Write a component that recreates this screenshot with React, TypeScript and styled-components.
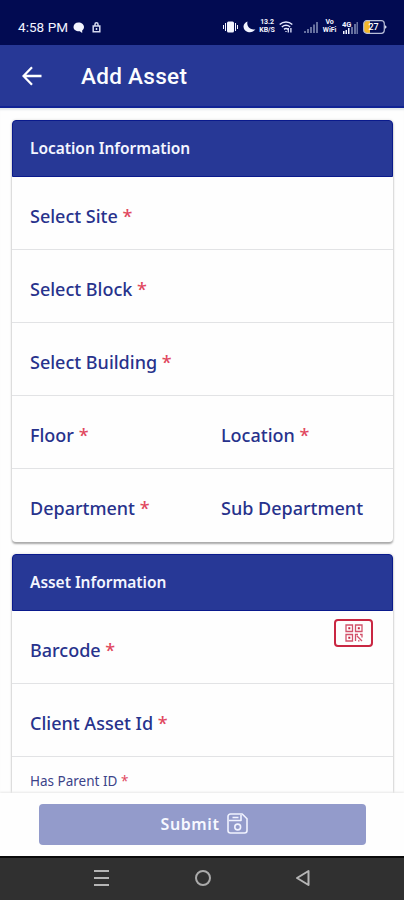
import React from "react";
import styled, { createGlobalStyle } from "styled-components";

const GlobalStyle = createGlobalStyle`
  *, *::before, *::after { box-sizing: border-box; }
  body { margin: 0; background: #fdfdfd; font-family: "Noto Sans", "Open Sans", sans-serif; }
`;

const Screen = styled.div`
  width: 404px;
  height: 900px;
  display: flex;
  flex-direction: column;
  overflow: hidden;
  background: #fefefe;
`;

const StatusBar = styled.div`
  flex: none;
  height: 45px;
  padding: 9px 17px 0 18px;
  display: flex;
  align-items: center;
  background: #020b52;
  color: #f2f4ff;
`;

const Clock = styled.span`
  width: 50px;
  font: 400 13.5px/18px Roboto, sans-serif;
  letter-spacing: 0.05px;
  white-space: nowrap;
`;

const StatusIcon = styled.svg<{ $gap?: number }>`
  flex: none;
  display: block;
  margin-left: ${({ $gap = 0 }) => $gap}px;
`;

const Spacer = styled.div`
  flex: 1;
`;

const TinyStack = styled.div<{ $gap: number; $width: number }>`
  width: ${({ $width }) => $width}px;
  margin-left: ${({ $gap }) => $gap}px;
  margin-top: -2px;
  display: flex;
  flex-direction: column;
  align-items: center;
  font: 700 7px/8px Roboto, sans-serif;
  letter-spacing: -0.1px;
  white-space: nowrap;
`;

const AppBar = styled.header`
  flex: none;
  height: 63px;
  padding: 1px 22px 0;
  display: flex;
  align-items: center;
  gap: 39px;
  background: #273896;
  border-bottom: 2px solid #102393;
`;

const Title = styled.h1`
  margin: 0;
  font: 500 22.5px/30px Roboto, sans-serif;
  letter-spacing: 0.3px;
  color: #fbfcff;
`;

const Content = styled.main`
  flex: none;
  height: 685px;
  padding: 12px 11px 0 12px;
  overflow: hidden;
  display: flex;
  flex-direction: column;
  gap: 12px;
  box-shadow: inset 0 3px 2px -1px #e3e8ea;
`;

const Card = styled.section`
  flex: none;
  border-radius: 4px;
  background: #fefefe;
  box-shadow: 0 2px 2px #a9a9a9, 0 0 2px 1px #ececec;
`;

const CardHeader = styled.h2`
  height: 57px;
  margin: 0;
  padding: 0 17px 1px;
  display: flex;
  align-items: center;
  border: 1px solid #0a1a8c;
  border-radius: 4px 4px 0 0;
  background: #273896;
  color: #f3f5ff;
  font-size: 15.5px;
  font-weight: 600;
  line-height: 22px;
  letter-spacing: -0.03px;
`;

const Row = styled.div<{ $last?: boolean }>`
  height: ${({ $last }) => ($last ? 72.6 : 73.1)}px;
  padding: 5px 18px 0;
  display: grid;
  grid-template-columns: 191px 1fr;
  align-items: center;
  border-bottom: ${({ $last }) => ($last ? 0 : "1px solid #e2e3e5")};
`;

const Label = styled.span<{ $small?: boolean }>`
  color: ${({ $small }) => ($small ? "#3c4389" : "#27328c")};
  font-size: ${({ $small }) => ($small ? 13.5 : 18)}px;
  font-weight: ${({ $small }) => ($small ? 400 : 500)};
  line-height: 24px;
  white-space: nowrap;
`;

const Required = styled.span`
  color: #e1485f;
`;

const ParentRow = styled.div`
  height: 73px;
  padding: 12px 18px;
`;

const ScanButton = styled.button`
  justify-self: end;
  align-self: start;
  width: 39px;
  height: 28px;
  margin: 3px 2px 0 0;
  padding: 0;
  display: flex;
  align-items: center;
  justify-content: center;
  border: 2px solid #c92742;
  border-radius: 4px;
  background: #fefefe;
`;

const Footer = styled.footer`
  flex: none;
  height: 63px;
  padding: 11px 38px 0 39px;
  background: #fefefe;
  box-shadow: 0 -1px 2px #e8e8e8;
`;

const Submit = styled.button`
  width: 100%;
  height: 41px;
  padding: 0 0 2px 3px;
  display: flex;
  align-items: center;
  justify-content: center;
  gap: 7px;
  border: 0;
  border-radius: 4px;
  background: #939bcb;
  color: #f7f8ff;
  font: 600 16px/24px "Noto Sans", sans-serif;
  letter-spacing: 0.6px;
`;

const NavBar = styled.nav`
  flex: none;
  height: 44px;
  padding: 0 92px 2px;
  display: flex;
  align-items: center;
  justify-content: space-between;
  background: #303030;
  border-top: 2px solid #0b0b0b;
`;

type FieldProps = { text: string; required?: boolean; small?: boolean };

function Field({ text, required = true, small }: FieldProps) {
  return (
    <Label $small={small}>
      {text}
      {required && <Required> *</Required>}
    </Label>
  );
}

function Signal({ gap }: { gap: number }) {
  return (
    <StatusIcon $gap={gap} width="15" height="12" viewBox="0 0 15 12" fill="#66709f">
      <path d="M0 10h2v2H0zM3 8h2v4H3zM6 6h2v6H6zM9 3.500h2V12H9zM12 1h2v11h-2z" />
    </StatusIcon>
  );
}

function QrIcon() {
  return (
    <svg width="18" height="18" viewBox="0 0 18 18" fill="none" stroke="#d2516a" strokeWidth="1.3">
      <path d="M1 1h6.500v6.500H1zM10.500 1H17v6.500h-6.500zM1 10.500h6.500V17H1z" />
      <path d="M10.500 17v-6.500h2.500M12 12l5 5M15 10.500h2v3M13 16.800h1.500" />
      <path d="M3.300 3.300h2v2h-2zM12.800 3.300h2v2h-2zM3.300 12.800h2v2h-2z" fill="#c92742" stroke="none" />
    </svg>
  );
}

function SaveIcon() {
  return (
    <svg width="21" height="21" viewBox="0 0 21 21" fill="none" stroke="#f1f3ff" strokeWidth="1.600" strokeLinejoin="round">
      <path d="M3.500 1h11.700L20 5.800v11.700a2.500 2.500 0 0 1-2.500 2.500h-14A2.500 2.500 0 0 1 1 17.500v-14A2.500 2.500 0 0 1 3.500 1z" />
      <path d="M2 7.500h12V2M5.500 4.500h6" />
      <circle cx="10.700" cy="14" r="2.900" />
    </svg>
  );
}

export default function App() {
  return (
    <>
      <GlobalStyle />
      <Screen>
        <StatusBar>
          <Clock>4:58 PM</Clock>
          <StatusIcon $gap={5} width="12" height="11" viewBox="0 0 12 11" fill="#f2f4ff">
            <path d="M5.500.5C8.500.5 11 2.300 11 5c0 1.500-.7 2.600-1.800 3.400V11L6.800 9.300C3 9.600.5 7.500.5 5 .5 2.300 2.500.5 5.500.5z" />
          </StatusIcon>
          <StatusIcon $gap={7} width="9" height="12" viewBox="0 0 9 12" fill="none" stroke="#d5d9ef" strokeWidth="1.500">
            <path d="M1.200 5h6.600v5.800H1.200zM3 5V3.300a1.500 1.500 0 0 1 3 0V5M4.500 7v2" />
          </StatusIcon>
          <Spacer />
          <StatusIcon width="15" height="12" viewBox="0 0 15 12" fill="#f2f4ff">
            <rect x="4" y="0.500" width="7" height="11" rx="1.500" />
            <path d="M2 2h1v8H2zM0 4h1v4H0zM12 2h1v8h-1zM14 4h1v4h-1z" />
          </StatusIcon>
          <StatusIcon $gap={5} width="13" height="12" viewBox="0 0 13 12" fill="#f2f4ff">
            <path d="M4.500.5C3.200 4.800 7 9.500 12.500 8.300 10.800 10.600 8.500 11.600 6 11.300 2.700 11 .5 8.300.5 5.300.7 3.200 2.200 1.300 4.500.5z" />
          </StatusIcon>
          <TinyStack $gap={3} $width={16}>
            <span>13.2</span>
            <span>KB/S</span>
          </TinyStack>
          <StatusIcon $gap={4} width="14" height="12" viewBox="0 0 14 12" fill="none" stroke="#e4e8ff" strokeWidth="1.500">
            <path d="M.7 3.500C4.300.3 9.700.3 13.300 3.500M2.800 6c2.500-2 5.900-2 8.400 0M5 8.300c1.300-1 2.700-1 4 0" />
            <path d="M9.300 7v4.500M11.900 7v4.500M7 10v1" strokeWidth="1.300" />
          </StatusIcon>
          <Signal gap={11} />
          <TinyStack $gap={3} $width={15}>
            <span>Vo</span>
            <span>WiFi</span>
          </TinyStack>
          <StatusIcon $gap={5} width="16" height="13" viewBox="0 0 16 13">
            <path d="M9 6h2v7H9zM12 3h2v10h-2zM14.500 1h1.500v12h-1.500z" fill="#66709f" />
            <path d="M1 10h1.500v3H1zM3.500 9H5v4H3.500zM6 7h1.500v6H6z" fill="#f2f4ff" />
            <text x="0" y="6" fill="#f2f4ff" fontFamily="Roboto, sans-serif" fontSize="7.500" fontWeight="700">4G</text>
          </StatusIcon>
          <StatusIcon $gap={5} width="24" height="14" viewBox="0 0 24 14">
            <path d="M3.500 1h3.500v12h-3.500A2.500 2.500 0 0 1 1 10.500v-7A2.500 2.500 0 0 1 3.500 1z" fill="#f5b82a" />
            <rect x="0.700" y="0.700" width="20.600" height="12.600" rx="3" fill="none" stroke="#b9bfd9" strokeWidth="1.200" />
            <path d="M22 5l1.800 2L22 9z" fill="#d5d9ef" />
            <text x="5.500" y="10.200" fill="#fff" fontFamily="Roboto, sans-serif" fontSize="9" fontWeight="500">27</text>
          </StatusIcon>
        </StatusBar>

        <AppBar>
          <svg width="20" height="20" viewBox="0 0 20 20" fill="none" stroke="#fff" strokeWidth="2.300">
            <path d="M19.500 10H2M10 1.200L1.500 10l8.500 8.800" />
          </svg>
          <Title>Add Asset</Title>
        </AppBar>

        <Content>
          <Card>
            <CardHeader>Location Information</CardHeader>
            <Row><Field text="Select Site" /></Row>
            <Row><Field text="Select Block" /></Row>
            <Row><Field text="Select Building" /></Row>
            <Row>
              <Field text="Floor" />
              <Field text="Location" />
            </Row>
            <Row $last>
              <Field text="Department" />
              <Field text="Sub Department" required={false} />
            </Row>
          </Card>
          <Card>
            <CardHeader>Asset Information</CardHeader>
            <Row>
              <Field text="Barcode" />
              <ScanButton aria-label="Scan barcode"><QrIcon /></ScanButton>
            </Row>
            <Row><Field text="Client Asset Id" /></Row>
            <ParentRow><Field text="Has Parent ID" small /></ParentRow>
          </Card>
        </Content>

        <Footer>
          <Submit>
            Submit
            <SaveIcon />
          </Submit>
        </Footer>

        <NavBar>
          <svg width="19" height="18" viewBox="0 0 19 18" stroke="#b5b5b5" strokeWidth="2">
            <path d="M2 2h15M2 9h15M2 16h15" />
          </svg>
          <svg width="18" height="18" viewBox="0 0 18 18" fill="none" stroke="#aaa" strokeWidth="2">
            <circle cx="9" cy="9" r="7" />
          </svg>
          <svg width="18" height="18" viewBox="0 0 18 18" fill="none" stroke="#b5b5b5" strokeWidth="2" strokeLinejoin="round">
            <path d="M14.500 2v14L3 9z" />
          </svg>
        </NavBar>
      </Screen>
    </>
  );
}
